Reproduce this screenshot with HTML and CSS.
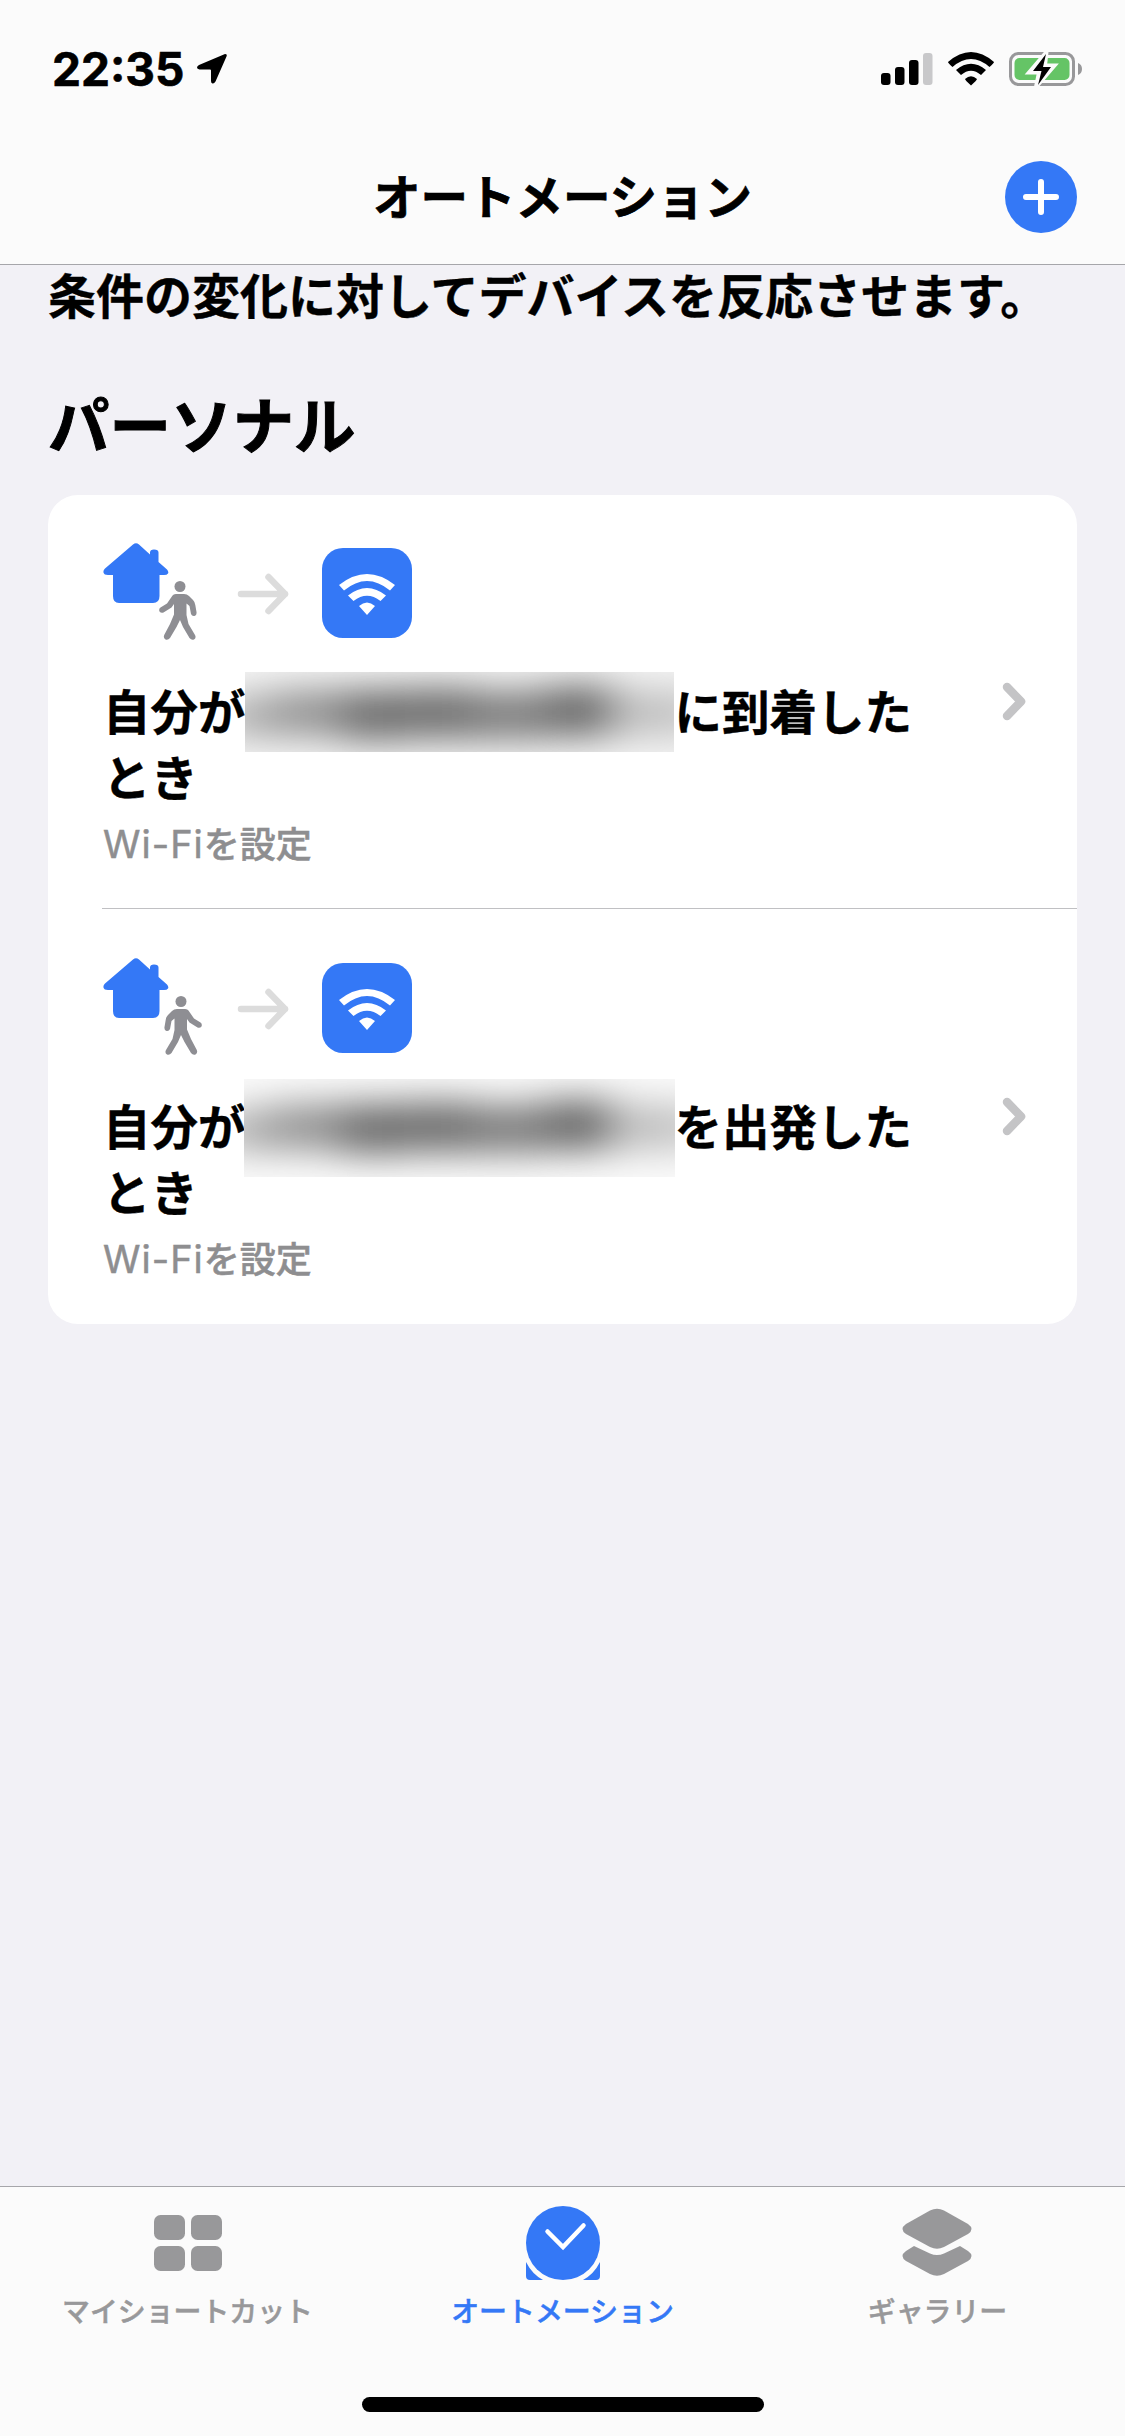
FILE: index.html
```html
<!DOCTYPE html>
<html lang="ja">
<head>
<meta charset="utf-8">
<title>オートメーション</title>
<link rel="stylesheet" href="styles.css">
</head>
<body>
<svg class="defs" width="0" height="0" aria-hidden="true">
  <defs>
    <filter id="smudge" x="-20%" y="-150%" width="140%" height="400%"><feGaussianBlur stdDeviation="21 18"/></filter>
    <symbol id="house" viewBox="0 0 66 60">
      <path d="M30 1.5Q33 -1 36 1.5L47 11.500V9.500Q47 6.500 51 6.500Q55.500 6.500 55.500 9.500V19L64 26.500Q66 29 65 30.500Q64 32 61 32H56.500V53Q56.500 60 50 60H16Q10 60 10 53V32H5Q1 32 .5 29.500Q0 27.500 2 25.500Z"/>
    </symbol>
    <symbol id="walker" viewBox="0 0 38 59">
      <circle cx="21" cy="5.500" r="5.500"/>
      <path d="M17 13H25Q28 13 30 15L34 19Q36 21 36.300 24L37.500 31Q38 34 35.500 35Q33 35.500 32 33L30.500 25L27.500 22.500V34L29.500 43L36 54Q37.500 57 35 58.500Q32.500 59.500 30.500 57L24 46L21 39L17.500 46L11 57Q9 59.500 6.500 58.500Q4 57 5.200 54L11 43L15 33.500V23L12.500 26.500L4.500 31.500Q2 32.500.5 30.500Q-.5 28 1.500 26.500L8 22.500L12.500 16Q14 13 17 13Z"/>
    </symbol>
    <symbol id="arrow" viewBox="0 0 52 42">
      <path d="M4 21H48M31.500 4L48 21L31.500 38" fill="none" stroke="currentColor" stroke-width="6.500" stroke-linecap="round" stroke-linejoin="round"/>
    </symbol>
    <symbol id="wifi" viewBox="0 0 56 41">
      <path d="M0 11Q28 -11 56 11L51 16.500Q28 -2.500 5 16.500ZM9 21.500Q28 6.500 47 21.500L41.500 27Q28 16.500 14.500 27ZM20 32Q28 25 36 32L28 41Z"/>
    </symbol>
    <symbol id="chevron" viewBox="0 0 24 40">
      <path d="M5 5L19 19.500L5 34" fill="none" stroke="currentColor" stroke-width="8.500" stroke-linecap="round" stroke-linejoin="round"/>
    </symbol>
    <g id="smudge-shape" filter="url(#smudge)">
      <rect x="-20" y="-17" width="50" height="42" fill="#aaa"/>
      <rect x="30" y="-22" width="65" height="46" fill="#929292"/>
      <rect x="95" y="-22" width="65" height="50" fill="#6a6a6a"/>
      <rect x="160" y="-24" width="70" height="50" fill="#6c6c6c"/>
      <rect x="230" y="-21" width="70" height="48" fill="#7a7a7a"/>
      <rect x="300" y="-26" width="70" height="50" fill="#686868"/>
      <rect x="370" y="-22" width="85" height="46" fill="#c0c0c0"/>
    </g>
  </defs>
</svg>
<div class="screen">
  <header class="top">
    <div class="status">
      <div class="status-left">
        <span class="clock">22:35</span>
        <svg class="location" width="30" height="30" viewBox="0 0 30 30"><path d="M28 0Q30.500 0 29.500 2.500L18.500 27.500Q17 30 15.500 29.500Q14 29 14 27V16.500Q14 15.500 13 15.500H2.500Q0 15 0 13.500Q0 12 2 11Z"/></svg>
      </div>
      <div class="status-right">
        <svg width="52" height="34" viewBox="0 0 52 34"><rect y="21" width="9.500" height="12" rx="3"/><rect x="14" y="15" width="9.500" height="18" rx="3"/><rect x="28" y="8" width="9.500" height="25" rx="3"/><rect x="42" y="1" width="9.500" height="32" rx="3" fill="#c8c8ca"/></svg>
        <svg class="status-wifi" width="46" height="34" viewBox="0 0 46 34"><path d="M0 10Q23 -10 46 10Q46 11 41.500 15Q23 -1 4.500 15Q0 11 0 10ZM8 18Q23 5.500 38 18L33 23Q23 14.500 13 23ZM17 27Q23 21.500 29 27Q29 28 23 33.500Q17 28 17 27Z"/></svg>
        <svg width="74" height="38" viewBox="0 0 74 38"><rect x="1.500" y="3.500" width="63" height="31" rx="8" fill="none" stroke="#98989a" stroke-width="3"/><rect x="5.500" y="8" width="55" height="22" rx="5" fill="#65c466"/><path d="M69 13Q73 14.500 73 19Q73 23.500 69 25Z" fill="#98989a"/><path d="M37.500 2L20 22.500H30L27 37L45.500 15.500H36Z" stroke="#fbfbfb" stroke-width="4" fill="#fbfbfb"/><path d="M37 4L24 21H32.500L29 35L42 17H34Z"/></svg>
      </div>
    </div>
    <div class="navbar">
      <h1 class="nav-title">オートメーション</h1>
      <button class="add" aria-label="追加"><svg width="72" height="72" viewBox="0 0 72 72"><path d="M36 21V51M21 36H51" fill="none" stroke="#fff" stroke-width="6" stroke-linecap="round"/></svg></button>
    </div>
  </header>

  <main class="content">
    <p class="lead">条件の変化に対してデバイスを反応させます。</p>
    <h2 class="section-title">パーソナル</h2>
    <ul class="card">
      <li class="row">
        <div class="row-main">
          <div class="icons">
            <div class="trigger">
              <svg class="house"><use href="#house"/></svg>
              <svg class="walker"><use href="#walker"/></svg>
            </div>
            <svg class="arrow"><use href="#arrow"/></svg>
            <div class="tile"><svg class="tile-wifi"><use href="#wifi"/></svg></div>
          </div>
          <p class="row-title">自分が<span class="hidden-name"><svg class="veil veil-short" viewBox="0 -40 429 80"><rect y="-40" width="429" height="80" fill="#f4f4f4"/><use href="#smudge-shape"/></svg></span>に到着した<br>とき</p>
          <p class="row-sub"><span class="latin">Wi-Fi</span>を設定</p>
        </div>
        <svg class="chevron"><use href="#chevron"/></svg>
      </li>
      <li class="row">
        <div class="row-main">
          <div class="icons">
            <div class="trigger">
              <svg class="house"><use href="#house"/></svg>
              <svg class="walker walker-away"><use href="#walker"/></svg>
            </div>
            <svg class="arrow"><use href="#arrow"/></svg>
            <div class="tile"><svg class="tile-wifi"><use href="#wifi"/></svg></div>
          </div>
          <p class="row-title">自分が<span class="hidden-name"><svg class="veil veil-tall" viewBox="0 -47 431 98"><rect y="-47" width="431" height="98" fill="#fafafa"/><use href="#smudge-shape"/></svg></span>を出発した<br>とき</p>
          <p class="row-sub"><span class="latin">Wi-Fi</span>を設定</p>
        </div>
        <svg class="chevron"><use href="#chevron"/></svg>
      </li>
    </ul>
  </main>

  <footer class="bottom">
    <nav class="tabs">
      <a class="tab">
        <svg width="76" height="76" viewBox="0 0 76 76"><g fill="currentColor"><rect x="4" y="10" width="31" height="25" rx="6.500"/><rect x="41" y="10" width="31" height="25" rx="6.500"/><rect x="4" y="41" width="31" height="25" rx="6.500"/><rect x="41" y="41" width="31" height="25" rx="6.500"/></g></svg>
        <span>マイショートカット</span>
      </a>
      <a class="tab tab-active">
        <svg width="76" height="76" viewBox="0 0 76 76"><circle cx="38" cy="38" r="37" fill="currentColor"/><path d="M1 57Q7 69 18 75H5Q1 75 1 71ZM75 57Q69 69 58 75H71Q75 75 75 71Z" fill="currentColor"/><path d="M22.500 26.500L38 42L58.500 20.500" fill="none" stroke="#fff" stroke-width="4.500" stroke-linecap="round"/></svg>
        <span>オートメーション</span>
      </a>
      <a class="tab">
        <svg width="76" height="76" viewBox="0 0 76 76"><g fill="currentColor"><path d="M30 5.500Q37 2 44 5.500L68 19Q75 24 68 29L44 42Q37 45.500 30 42L6 29Q-1 24 6 19Z"/><path d="M14 41L30 48.500Q37 51.500 44 48.500L60 41L68 46Q75 51 68 56L44 69Q37 72.500 30 69L6 56Q-1 51 6 46Z"/></g></svg>
        <span>ギャラリー</span>
      </a>
    </nav>
    <div class="home-bar"></div>
  </footer>
</div>
</body>
</html>
```
FILE: styles.css
```css
* { box-sizing: border-box; margin: 0; padding: 0; }

body {
  background: #f2f1f6;
  color: #000;
  font-family: "Noto Sans CJK JP", sans-serif;
}

svg { display: block; flex: none; }
.defs { position: absolute; }

.screen {
  width: 1125px;
  height: 2436px;
  display: flex;
  flex-direction: column;
  overflow: hidden;
}

/* status bar and title */
.top {
  height: 265px;
  background: #fbfbfb;
  border-bottom: 1px solid #a6a6aa;
}

.status {
  height: 132px;
  padding: 0 42px 0 52px;
  display: flex;
  justify-content: space-between;
}

.status-left, .status-right { display: flex; align-items: center; height: 138px; }
.clock {
  width: 145px;
  font: 700 46px/54px Inter, sans-serif;
  -webkit-text-stroke: .6px #000;
}
.status-right { gap: 15px; }

.navbar {
  height: 130px;
  padding: 0 48px;
  display: grid;
  grid-template-columns: 72px 1fr 72px;
  align-items: center;
}

.nav-title {
  grid-column: 2;
  padding-bottom: 5px;
  font-size: 47.500px;
  line-height: 60px;
  font-weight: 700;
  text-align: center;
  -webkit-text-stroke: .7px #000;
}

.add {
  width: 72px;
  height: 72px;
  border: 0;
  border-radius: 50%;
  background: #3478f6;
}

/* scrolling content */
.content { flex: 1; padding: 1px 48px 0; }
.lead { font-size: 48px; line-height: 54px; font-weight: 700; white-space: nowrap; -webkit-text-stroke: .4px #000; }
.section-title { margin-top: 63px; font-size: 61.500px; line-height: 80px; font-weight: 700; -webkit-text-stroke: 1px #000; }

.card {
  margin-top: 32px;
  border-radius: 30px;
  background: #fff;
  list-style: none;
}

.row {
  height: 413px;
  margin-left: 54px;
  padding-right: 51px;
  display: flex;
  justify-content: space-between;
  align-items: center;
}
.row + .row { height: 416px; border-top: 1px solid #c0c0c3; }

.row-main { align-self: flex-start; padding: 48px 0 0 1px; }
.row + .row .row-main { padding-top: 49px; }

.icons { height: 98px; display: flex; align-items: flex-start; }
.trigger { width: 94px; height: 98px; display: flex; align-items: flex-start; }
.house { width: 66px; height: 60px; fill: #3478f6; }
.walker { width: 38px; height: 59px; margin: 38px 0 0 -10px; fill: #8e8e93; }
.walker-away { margin-left: -5px; transform: scaleX(-1); }
.arrow { width: 52px; height: 42px; margin: 30px 0 0 40px; color: #dcdcdc; }

.tile {
  width: 90px;
  height: 90px;
  margin: 5px 0 0 33px;
  border-radius: 21px;
  background: #3478f6;
  display: grid;
  place-items: center;
}
.tile-wifi { width: 56px; height: 41px; margin-top: 3px; fill: #fff; }

.row-title {
  margin-top: 36px;
  font-size: 47.500px;
  line-height: 66px;
  font-weight: 700;
  white-space: nowrap;
  -webkit-text-stroke: .4px #000;
}

.hidden-name {
  display: inline-block;
  position: relative;
  width: 429px;
  height: 40px;
}
.veil { position: absolute; overflow: hidden; }
.veil-short { width: 429px; height: 80px; left: -1px; top: -18px; }
.veil-tall { width: 431px; height: 98px; left: -2px; top: -26px; }

.row-sub {
  margin-top: 11px;
  font-size: 36px;
  line-height: 44px;
  font-weight: 500;
  color: #8e8e90;
  -webkit-text-stroke: .5px #8e8e90;
}
.latin { font-family: Inter, sans-serif; font-size: 38px; font-weight: 400; letter-spacing: 1px; }

.chevron { width: 24px; height: 40px; color: #c4c4c6; }

/* tab bar */
.bottom {
  height: 250px;
  background: #fbfbfb;
  border-top: 1px solid #a6a6aa;
}

.tabs { height: 210px; display: grid; grid-template-columns: repeat(3, 1fr); }
.tab {
  padding-top: 18px;
  display: flex;
  flex-direction: column;
  align-items: center;
  gap: 11px;
  color: #98989a;
  font-size: 27.900px;
  line-height: 36px;
  font-weight: 500;
  -webkit-text-stroke: .5px currentColor;
}
.tab-active { color: #3478f6; }

.home-bar { width: 402px; height: 15px; margin: 0 auto; border-radius: 8px; background: #000; }
```
